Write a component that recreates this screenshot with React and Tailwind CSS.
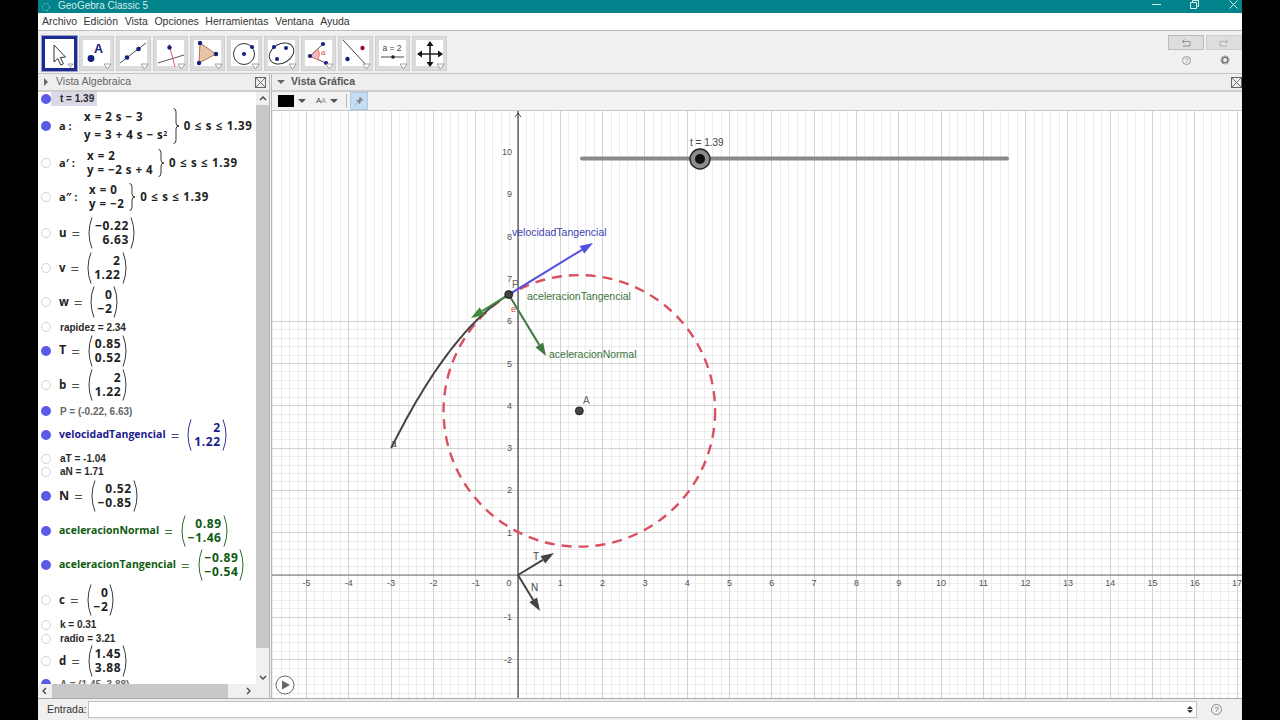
import React from "react";

const SANS = "font-['Liberation_Sans',Arial,sans-serif]";
const MATH = "font-['Open_Sans',sans-serif]";

function Dot({ on }) {
  return on ? (
    <span className="block w-[10px] h-[10px] shrink-0 rounded-full bg-[#5a5ae6]" />
  ) : (
    <span className="block w-[10px] h-[10px] shrink-0 rounded-full bg-white border border-[#d4d4d4]" />
  );
}

function Paren({ right, h = 32 }) {
  return (
    <svg width="6" height={h} viewBox={`0 0 6 ${h}`} className="shrink-0">
      <path
        d={right ? `M1 0.5 Q7 ${h / 2} 1 ${h - 0.5}` : `M5 0.5 Q-1 ${h / 2} 5 ${h - 0.5}`}
        fill="none"
        stroke="currentColor"
        strokeWidth="0.9"
      />
    </svg>
  );
}

function Brace({ h = 34 }) {
  const m = h / 2;
  return (
    <svg width="7" height={h} viewBox={`0 0 7 ${h}`} className="shrink-0">
      <path
        d={`M0.5 0.5 Q3 0.5 3 4 L3 ${m - 3} Q3 ${m} 6 ${m} Q3 ${m} 3 ${m + 3} L3 ${h - 4} Q3 ${h - 0.5} 0.5 ${h - 0.5}`}
        fill="none"
        stroke="#222"
        strokeWidth="0.9"
      />
    </svg>
  );
}

function Matrix({ a, b }) {
  return (
    <div className="flex items-center">
      <Paren />
      <div className="flex flex-col items-end text-[12px] leading-[14px] font-bold tracking-[0.6px] pl-[2px] pr-[1px]">
        <span>{a}</span>
        <span>{b}</span>
      </div>
      <Paren right />
    </div>
  );
}

function VecRow({ on, name, a, b, cls, color = "text-[#222]", nameCls = "text-[11.5px]", eqCls = "ml-[5px] mr-[7px]" }) {
  return (
    <div className={`flex items-center pl-[3px] ${MATH} ${cls} ${color}`}>
      <Dot on={on} />
      <span className={`ml-[8px] font-bold ${nameCls}`}>{name}</span>
      <span className={`text-[15px] leading-[14px] font-normal opacity-80 ${eqCls}`}>=</span>
      <Matrix a={a} b={b} />
    </div>
  );
}

function TextRow({ on, text, cls, color = "text-[#2a2a2a]" }) {
  return (
    <div className={`flex items-center pl-[3px] ${cls}`}>
      <Dot on={on} />
      <span className={`ml-[9px] text-[10px] font-bold ${SANS} ${color}`}>{text}</span>
    </div>
  );
}

function ParamRow({ on, name, l1, l2, cond, cls, lineCls, braceH, braceMl }) {
  return (
    <div className={`flex items-center pl-[3px] text-[#222] ${MATH} ${cls}`}>
      <Dot on={on} />
      <span className="ml-[8px] w-[18px] text-[11px] font-bold whitespace-nowrap">{name}</span>
      <div className={`flex flex-col text-[11.5px] font-bold tracking-[0.5px] whitespace-nowrap ${lineCls}`}>
        <span>{l1}</span>
        <span>{l2}</span>
      </div>
      <div className={braceMl}>
        <Brace h={braceH} />
      </div>
      <span className="ml-[4px] text-[11.5px] font-bold whitespace-nowrap tracking-[0.7px]">{cond}</span>
    </div>
  );
}

function AlgebraList() {
  return (
    <div className="flex flex-col h-full overflow-hidden">
      <div className="flex items-center pl-[3px] h-[14px] shrink-0">
        <Dot on />
        <span className={`pl-[9px] pr-[3px] bg-[#d9d9e8] h-[14px] leading-[14px] text-[10px] font-bold text-[#2a2a2a] ${SANS}`}>t = 1.39</span>
      </div>
      <ParamRow on name="a :" cls="h-[40px] shrink-0" lineCls="ml-[7px] leading-[18px]" braceH={36} braceMl="ml-[5px]"
        l1="x = 2 s − 3" l2={<>y = 3 + 4 s − s<sup className="text-[7px]">2</sup></>} cond="0 ≤ s ≤ 1.39" />
      <ParamRow name="a′ :" cls="h-[34px] shrink-0" lineCls="ml-[10px] leading-[14px]" braceH={28} braceMl="ml-[5px]"
        l1="x = 2" l2="y = −2 s + 4" cond="0 ≤ s ≤ 1.39" />
      <ParamRow name="a″ :" cls="h-[34px] shrink-0" lineCls="ml-[12px] leading-[14px]" braceH={28} braceMl="ml-[5px]"
        l1="x = 0" l2="y = −2" cond="0 ≤ s ≤ 1.39" />
      <VecRow name="u" a="−0.22" b="6.63" cls="h-[37px] shrink-0" />
      <VecRow name="v" a="2" b="1.22" cls="h-[34px] shrink-0" />
      <VecRow name="w" a="0" b="−2" cls="h-[34px] shrink-0" />
      <TextRow text="rapidez = 2.34" cls="h-[16px] shrink-0" />
      <VecRow on name="T" a="0.85" b="0.52" cls="h-[31px] shrink-0" nameCls="text-[12.5px]" />
      <VecRow name="b" a="2" b="1.22" cls="h-[38px] shrink-0" />
      <TextRow on text="P = (-0.22, 6.63)" cls="h-[14px] shrink-0" color="text-[#666]" />
      <VecRow on name="velocidadTangencial" a="2" b="1.22" cls="h-[34px] shrink-0" color="text-[#1a1a8c]" nameCls="text-[10.5px]" />
      <TextRow text="aT = -1.04" cls="h-[13px] shrink-0" />
      <TextRow text="aN = 1.71" cls="h-[13px] shrink-0" />
      <VecRow on name="N" a="0.52" b="−0.85" cls="h-[36px] shrink-0" nameCls="text-[12.5px]" />
      <VecRow on name="aceleracionNormal" a="0.89" b="−1.46" cls="h-[33px] shrink-0" color="text-[#0f5a0f]" nameCls="text-[10.5px]" />
      <VecRow on name="aceleracionTangencial" a="−0.89" b="−0.54" cls="h-[36px] shrink-0" color="text-[#0f5a0f]" nameCls="text-[10.5px]" />
      <VecRow name="c" a="0" b="−2" cls="h-[34px] shrink-0" />
      <TextRow text="k = 0.31" cls="h-[15px] shrink-0" />
      <TextRow text="radio = 3.21" cls="h-[13px] shrink-0" />
      <VecRow name="d" a="1.45" b="3.88" cls="h-[32px] shrink-0" />
      <TextRow on text="A = (1.45, 3.88)" cls="h-[14px] shrink-0" color="text-[#666]" />
    </div>
  );
}

const NAVY = "#14207c";

function Corner() {
  return <path d="M25 28 L32 28 L28.5 33 Z" fill="#fff" stroke="#8a8a8a" strokeWidth="0.8" />;
}

const toolIcons = [
  <>
    <path d="M12 9 L12 26 L15.8 22.5 L18.8 29 L21.4 27.8 L18.4 21.5 L23.5 21 Z" fill="#fff" stroke="#333" strokeWidth="1" />
    <path d="M26 28 L31 28 L28.5 31.5 Z" fill="#fff" stroke="#777" strokeWidth="0.7" />
  </>,
  <>
    <circle cx="12" cy="22.5" r="3.4" fill={NAVY} />
    <text x="15" y="17" fontSize="12.5" fontWeight="700" fill={NAVY} fontFamily="Liberation Sans">A</text>
    <Corner />
  </>,
  <>
    <path d="M4 27 L30 7" stroke="#333" strokeWidth="0.9" />
    <circle cx="11" cy="21.5" r="2.3" fill={NAVY} />
    <circle cx="22.5" cy="13" r="2.3" fill={NAVY} />
    <Corner />
  </>,
  <>
    <path d="M5 27 L31 19" stroke="#444" strokeWidth="0.9" />
    <path d="M16 8 L22 31" stroke="#d8606a" strokeWidth="1" />
    <circle cx="16.5" cy="11.5" r="2.2" fill={NAVY} />
    <Corner />
  </>,
  <>
    <path d="M10 7 L26 18 L9 27 Z" fill="#e8c4a8" stroke="#a86a4a" strokeWidth="0.9" />
    <circle cx="10" cy="7" r="2.2" fill={NAVY} />
    <circle cx="26" cy="18" r="2.2" fill={NAVY} />
    <circle cx="9" cy="27" r="2.2" fill={NAVY} />
    <Corner />
  </>,
  <>
    <circle cx="17" cy="18" r="10.5" fill="none" stroke="#333" strokeWidth="1" />
    <circle cx="17" cy="18" r="2.1" fill={NAVY} />
    <circle cx="25" cy="11" r="2.1" fill={NAVY} />
    <Corner />
  </>,
  <>
    <ellipse cx="17.5" cy="17.5" rx="13" ry="9.5" transform="rotate(-30 17.5 17.5)" fill="none" stroke="#333" strokeWidth="1" />
    <circle cx="10" cy="11" r="2" fill={NAVY} />
    <circle cx="22" cy="12" r="2" fill={NAVY} />
    <circle cx="13" cy="23" r="2" fill={NAVY} />
    <Corner />
  </>,
  <>
    <path d="M9 20 L22 8 M9 20 L27 28" stroke="#333" strokeWidth="0.9" fill="none" />
    <path d="M9 20 L17 13 Q20 18 17 24 Z" fill="#f0b8b8" stroke="#d86060" strokeWidth="0.7" />
    <text x="20" y="19" fontSize="7" fill="#c03030" fontFamily="DejaVu Serif">α</text>
    <circle cx="22" cy="8" r="2.1" fill={NAVY} />
    <circle cx="9" cy="20" r="2.1" fill={NAVY} />
    <circle cx="25" cy="27" r="2.1" fill={NAVY} />
    <Corner />
  </>,
  <>
    <path d="M5 4 L30 31" stroke="#333" strokeWidth="0.9" />
    <circle cx="24.5" cy="12" r="2.2" fill="#8a1420" />
    <circle cx="9.5" cy="23" r="2.2" fill={NAVY} />
    <Corner />
  </>,
  <>
    <text x="17" y="15" fontSize="8.5" textAnchor="middle" fill="#444" fontFamily="Liberation Sans">a = 2</text>
    <path d="M6 21 L29 21" stroke="#333" strokeWidth="0.9" />
    <circle cx="18" cy="21" r="1.8" fill="#222" />
    <Corner />
  </>,
  <>
    <path d="M18 7 L18 29 M7 18 L29 18" stroke="#222" strokeWidth="1.6" />
    <path d="M18 5 L14.5 10 L21.5 10 Z M18 31 L14.5 26 L21.5 26 Z M5 18 L10 14.5 L10 21.5 Z M31 18 L26 14.5 L26 21.5 Z" fill="#111" />
    <Corner />
  </>,
];

function ToolButton({ icon, selected }) {
  return selected ? (
    <div className="w-[35px] h-[35px] shrink-0 bg-white border-[3px] border-[#1c2b8f] outline outline-1 outline-[#9aa0c8]">
      <svg width="29" height="29" viewBox="3 3 29 29" className="block">{icon}</svg>
    </div>
  ) : (
    <div className="relative w-[35px] h-[35px] shrink-0 bg-[#dcdcdc] border border-[#d0d0d0]">
      <div className="absolute left-[3px] top-[3px] w-[27px] h-[26px] bg-white" />
      <svg width="35" height="35" viewBox="0 0 35 35" className="absolute -left-px -top-px">{icon}</svg>
    </div>
  );
}

function CloseBox() {
  return (
    <svg width="11" height="11" viewBox="0 0 11 11" className="shrink-0">
      <rect x="0.5" y="0.5" width="10" height="10" fill="#eee" stroke="#666" />
      <path d="M1 1 L10 10 M10 1 L1 10" stroke="#666" strokeWidth="0.9" />
    </svg>
  );
}

function Tri({ cls = "border-t-[#555]" }) {
  return <span className={`block w-0 h-0 border-x-[4px] border-x-transparent border-t-[4px] ${cls}`} />;
}

function Graph() {
  const U = 42.3;
  const X0 = 518;
  const Y0 = 575;
  const sx = (v) => X0 + v * U;
  const sy = (v) => Y0 - v * U;
  const L = 272, R = 1242, T = 111, B = 698;
  const snap = (v) => Math.floor(v) + 0.5;
  const minorV = [], majorV = [], minorH = [], majorH = [];
  for (let i = -30; i <= 90; i++) {
    const x = X0 + (i * U) / 5;
    if (x < L || x > R) continue;
    (i % 5 === 0 ? majorV : minorV).push(snap(x));
  }
  for (let i = -30; i <= 70; i++) {
    const y = Y0 + (i * U) / 5;
    if (y < T || y > B) continue;
    (i % 5 === 0 ? majorH : minorH).push(snap(y));
  }
  const curve = [];
  for (let s = 0; s <= 1.39001; s += 0.03) {
    curve.push(`${sx(2 * s - 3).toFixed(1)},${sy(3 + 4 * s - s * s).toFixed(1)}`);
  }
  const P = [sx(-0.22), sy(6.63)];
  const xLabels = [-5, -4, -3, -2, -1, 1, 2, 3, 4, 5, 6, 7, 8, 9, 10, 11, 12, 13, 14, 15, 16, 17];
  const yLabels = [-2, -1, 1, 2, 3, 4, 5, 6, 7, 8, 9, 10];
  const arrow = (x1, y1, x2, y2, color, w = 2) => {
    const a = Math.atan2(y2 - y1, x2 - x1);
    const l = 13, hw = 4.5;
    const bx = x2 - l * Math.cos(a), by = y2 - l * Math.sin(a);
    const nx = -Math.sin(a) * hw, ny = Math.cos(a) * hw;
    return (
      <g>
        <line x1={x1} y1={y1} x2={bx} y2={by} stroke={color} strokeWidth={w} />
        <polygon points={`${x2},${y2} ${bx + nx},${by + ny} ${bx - nx},${by - ny}`} fill={color} />
      </g>
    );
  };
  return (
    <svg viewBox={`${L} ${T} ${R - L} ${B - T}`} width={R - L} height={B - T} className="block" fontFamily="Liberation Sans">
      {minorV.map((x) => <line key={x} x1={x} x2={x} y1={T} y2={B} stroke="#ececec" strokeWidth="1" />)}
      {minorH.map((y) => <line key={y} y1={y} y2={y} x1={L} x2={R} stroke="#ececec" strokeWidth="1" />)}
      {majorV.map((x) => <line key={x} x1={x} x2={x} y1={T} y2={B} stroke="#d2d2d2" strokeWidth="1" />)}
      {majorH.map((y) => <line key={y} y1={y} y2={y} x1={L} x2={R} stroke="#d2d2d2" strokeWidth="1" />)}
      <line x1={L} x2={R} y1={Y0} y2={Y0} stroke="#777" strokeWidth="1.2" />
      <line x1={X0} x2={X0} y1={T} y2={B} stroke="#222" strokeWidth="1" />
      <path d={`M${X0 - 3} ${T + 6} L${X0} ${T + 2} L${X0 + 3} ${T + 6}`} fill="none" stroke="#222" strokeWidth="0.8" />
      {xLabels.map((v) => (
        <text key={v} x={sx(v)} y={Y0 + 11} fontSize="9" textAnchor="middle" fill="#555">{v}</text>
      ))}
      <text x={X0 - 9} y={Y0 + 11} fontSize="9" textAnchor="middle" fill="#555">0</text>
      {yLabels.map((v) => (
        <text key={v} x={X0 - 6} y={sy(v) + 3} fontSize="9" textAnchor="end" fill="#555">{v}</text>
      ))}

      <circle cx={sx(1.45)} cy={sy(3.88)} r={3.21 * U} fill="none" stroke="#d9505f" strokeWidth="2.4" strokeDasharray="10 7" />
      <polyline points={curve.join(" ")} fill="none" stroke="#444" strokeWidth="2" />
      <text x="391" y="447" fontSize="10" fill="#444">a</text>

      {arrow(P[0], P[1], 593, 243, "#5050e0")}
      {arrow(P[0], P[1], 471, 318, "#3f8a3f")}
      {arrow(P[0], P[1], 546, 356, "#3f7a3f")}
      {arrow(X0, Y0, 554, 553, "#444")}
      {arrow(X0, Y0, 540, 611, "#444")}

      <circle cx={P[0]} cy={P[1]} r="4" fill="#444" stroke="#111" strokeWidth="0.8" />
      <circle cx={sx(1.45)} cy={sy(3.88)} r="4" fill="#444" stroke="#111" strokeWidth="0.8" />

      <text x="512" y="236" fontSize="10.5" fill="#3f3fb0">velocidadTangencial</text>
      <text x="527" y="300" fontSize="10.5" fill="#3a733a">aceleracionTangencial</text>
      <text x="549" y="358" fontSize="10.5" fill="#3a733a">aceleracionNormal</text>
      <text x="512" y="288" fontSize="10" fill="#666">P</text>
      <text x="511" y="312" fontSize="9" fill="#c84040">e</text>
      <text x="583" y="404" fontSize="10" fill="#666">A</text>
      <text x="533" y="560" fontSize="10" fill="#444">T</text>
      <text x="531" y="591" fontSize="10" fill="#444">N</text>

      <line x1="582" x2="1007" y1="158.5" y2="158.5" stroke="#8a8a8a" strokeWidth="4" strokeLinecap="round" />
      <circle cx="700" cy="159" r="10" fill="#8a8a8a" stroke="#222" strokeWidth="1.4" />
      <circle cx="700" cy="159" r="5" fill="#111" />
      <text x="690" y="146" fontSize="10" fill="#444">t = 1.39</text>

      <circle cx="285" cy="685" r="9" fill="#fff" stroke="#666" strokeWidth="1" />
      <path d="M282 680.5 L290 685 L282 689.5 Z" fill="#666" />
    </svg>
  );
}

function Chevron({ dir }) {
  const d = {
    up: "M1 5 L4 2 L7 5",
    down: "M1 2 L4 5 L7 2",
    left: "M5 1 L2 4 L5 7",
    right: "M2 1 L5 4 L2 7",
  }[dir];
  return (
    <svg width="8" height="8" viewBox="0 0 8 8" className="shrink-0">
      <path d={d} fill="none" stroke="#444" strokeWidth="1.3" />
    </svg>
  );
}

export default function App() {
  const menus = ["Archivo", "Edición", "Vista", "Opciones", "Herramientas", "Ventana", "Ayuda"];
  return (
    <div className={`w-[1280px] h-[720px] bg-black overflow-hidden pl-[38px] ${SANS}`}>
      <div className="w-[1204px] h-[720px] bg-[#f0f0f0] flex flex-col">
        {/* Title bar */}
        <div className="h-[13px] bg-[#00838a] flex items-center shrink-0 overflow-hidden text-[#d8ecec]">
          <svg width="10" height="10" viewBox="0 0 10 10" className="ml-[3px] shrink-0">
            <circle cx="5" cy="5" r="3.5" fill="none" stroke="#a8cfd0" strokeWidth="0.8" strokeDasharray="2 1.4" />
          </svg>
          <span className="ml-[7px] text-[10px] leading-[8px] -translate-y-[1px]">GeoGebra Classic 5</span>
          <div className="ml-auto flex items-center -translate-y-[2px]">
            <span className="block w-[9px] h-[1px] bg-[#d8ecec] mr-[29px]" />
            <svg width="9" height="9" viewBox="0 0 9 9" className="mr-[30px]">
              <path d="M0.5 2.5 H6.5 V8.5 H0.5 Z M2.5 2.5 V0.5 H8.5 V6.5 H6.5" fill="none" stroke="#d8ecec" strokeWidth="1" />
            </svg>
            <svg width="9" height="9" viewBox="0 0 9 9" className="mr-[4px]">
              <path d="M0.5 0.5 L8.5 8.5 M8.5 0.5 L0.5 8.5" stroke="#d8ecec" strokeWidth="1" />
            </svg>
          </div>
        </div>
        {/* Menu */}
        <div className="h-[18px] bg-white flex items-center gap-[6.6px] pl-[4px] pt-[1px] text-[10.5px] text-[#333] shrink-0 border-b border-[#bdbdbd]">
          {menus.map((m) => <span key={m}>{m}</span>)}
        </div>
        {/* Toolbar */}
        <div className="h-[43px] bg-[#f0f0f0] flex items-center pl-[4px] pt-[2px] gap-[2px] shrink-0 border-b border-[#c4c4c4]">
          {toolIcons.map((ic, i) => <ToolButton key={i} icon={ic} selected={i === 0} />)}
          <div className="ml-auto flex flex-col self-start pt-[2px]">
            <div className="flex gap-[2px]">
              <div className="w-[36px] h-[15px] bg-[#dedede] border border-[#bcbcbc] flex items-center justify-center">
                <svg width="10" height="8" viewBox="0 0 10 8"><path d="M9 7 H2 M9 7 V2.5 H1.5 M3.5 0.5 L1.5 2.5 L3.5 4.5" fill="none" stroke="#888" strokeWidth="0.9" /></svg>
              </div>
              <div className="w-[36px] h-[15px] bg-[#dedede] border border-[#cfcfcf] flex items-center justify-center">
                <svg width="10" height="8" viewBox="0 0 10 8"><path d="M1 7 H8 M1 7 V2.5 H8.5 M6.5 0.5 L8.5 2.5 L6.5 4.5" fill="none" stroke="#aaa" strokeWidth="0.9" /></svg>
              </div>
            </div>
            <div className="flex items-center mt-[5px]">
              <span className="ml-[14px] w-[9px] h-[9px] rounded-full border border-[#999] text-[7px] leading-[7px] text-center text-[#888]">?</span>
              <svg width="10" height="10" viewBox="0 0 10 10" className="ml-[29px]">
                <circle cx="5" cy="5" r="2.8" fill="none" stroke="#777" strokeWidth="1.6" />
                <circle cx="5" cy="5" r="4" fill="none" stroke="#777" strokeWidth="1.2" strokeDasharray="1.2 1.3" />
              </svg>
            </div>
          </div>
        </div>
        {/* Main */}
        <div className="flex-1 flex min-h-0">
          {/* Algebra */}
          <div className="w-[232px] shrink-0 flex flex-col border-r border-[#b8b8b8] bg-white">
            <div className="h-[18px] bg-[#eeeeee] flex items-center pl-[6px] pr-[3px] border-b-2 border-[#cdcdcd] shrink-0">
              <span className="block w-0 h-0 border-y-[4px] border-y-transparent border-l-[4px] border-l-[#666]" />
              <span className="ml-[8px] text-[10.5px] text-[#666]">Vista Algebraica</span>
              <div className="ml-auto"><CloseBox /></div>
            </div>
            <div className="flex-1 min-h-0 flex">
              <div className="flex-1 min-w-0 flex flex-col">
                <div className="flex-1 min-h-0 bg-white overflow-hidden">
                  <AlgebraList />
                </div>
                <div className="h-[14px] shrink-0 flex items-center bg-[#f0f0f0]">
                  <span className="w-[14px] flex justify-center"><Chevron dir="left" /></span>
                  <div className="flex-1 h-full"><div className="w-[176px] h-full bg-[#c8c8c8]" /></div>
                  <span className="w-[14px] flex justify-center"><Chevron dir="right" /></span>
                </div>
              </div>
              <div className="w-[13px] shrink-0 flex flex-col bg-[#f0f0f0] pb-[14px]">
                <div className="h-[13px] flex items-center justify-center"><Chevron dir="up" /></div>
                <div className="h-[543px] bg-[#c8c8c8]" />
                <div className="mt-auto h-[13px] flex items-center justify-center"><Chevron dir="down" /></div>
              </div>
            </div>
          </div>
          {/* Graphics */}
          <div className="flex-1 min-w-0 flex flex-col ml-[1px] border-l border-[#b8b8b8]">
            <div className="h-[18px] bg-[#eeeeee] flex items-center pl-[5px] border-b-2 border-[#cdcdcd] shrink-0">
              <Tri cls="border-t-[#666]" />
              <span className="ml-[6px] text-[10.5px] font-bold text-[#555]">Vista Gráfica</span>
              <div className="ml-auto"><CloseBox /></div>
            </div>
            <div className="h-[19px] bg-[#f2f2f2] flex items-center pl-[6px] border-b border-[#c8c8c8] shrink-0">
              <span className="block w-[16px] h-[12px] bg-black" />
              <span className="ml-[4px]"><Tri /></span>
              <span className="ml-[10px] text-[8px] text-[#444]">A<span className="text-[7px] text-[#888]">A</span></span>
              <span className="ml-[4px]"><Tri /></span>
              <span className="ml-[8px] block w-px h-[14px] bg-[#b8b8b8]" />
              <span className="ml-[3px] w-[18px] h-[18px] bg-[#c5ddf2] border border-[#a9cbe6] flex items-center justify-center">
                <svg width="10" height="10" viewBox="0 0 10 10"><path d="M6 1 L9 4 L7.5 4.5 L6 6.5 L6 8 L2.5 4.5 L4 4.5 L5.5 2.5 Z M3.5 6.5 L1 9" fill="#888" stroke="#888" strokeWidth="0.6" /></svg>
              </span>
            </div>
            <div className="flex-1 min-h-0 bg-white overflow-hidden">
              <Graph />
            </div>
          </div>
        </div>
        {/* Input */}
        <div className="h-[22px] shrink-0 bg-[#f0f0f0] flex items-center border-t border-[#a8a8a8] pl-[9px] pr-[20px]">
          <span className="text-[10.5px] text-[#333] w-[41px]">Entrada:</span>
          <div className="w-[1110px] h-[17px] bg-white border border-[#c0c0c0] flex flex-col items-end justify-center pr-[3px] gap-[1px]">
            <span className="block w-0 h-0 border-x-[3px] border-x-transparent border-b-[3px] border-b-[#333]" />
            <span className="block w-0 h-0 border-x-[3px] border-x-transparent border-t-[3px] border-t-[#333]" />
          </div>
          <span className="ml-[14px] w-[11px] h-[11px] rounded-full border border-[#888] text-[8px] leading-[9px] text-center text-[#666]">?</span>
        </div>
      </div>
    </div>
  );
}
